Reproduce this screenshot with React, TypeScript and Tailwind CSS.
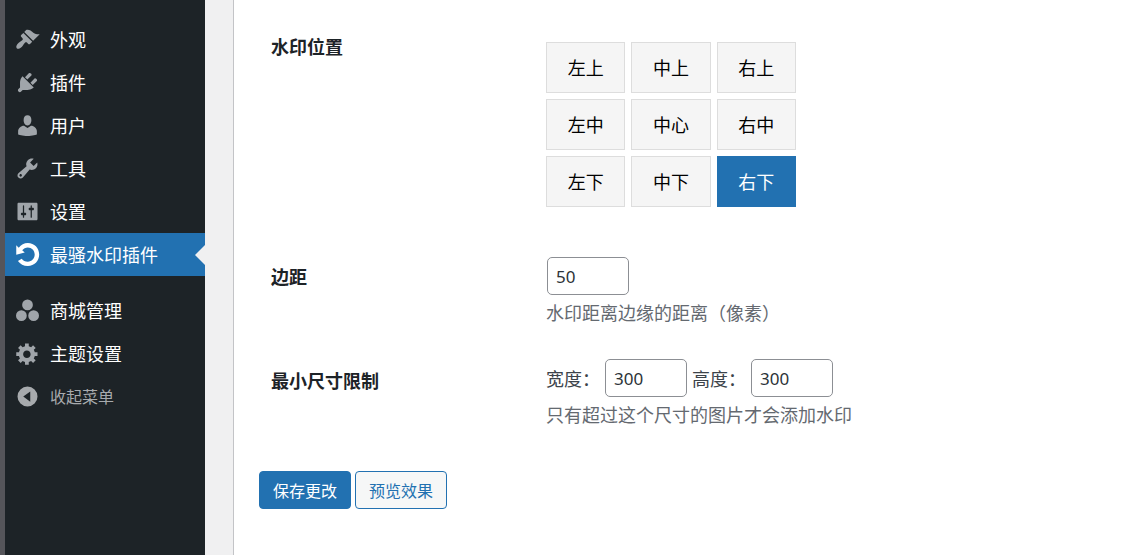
import { useState, type ReactNode } from "react";

const icons = {
  appearance:
    "M14.48 11.06L7.41 3.99l1.5-1.5c.5-.56 2.3-.47 3.51.32 1.21.8 1.43 1.28 2.91 2.1 1.18.64 2.45 1.26 4.45.85zm-.71.71L6.7 4.7 4.93 6.47c-.39.39-.39 1.02 0 1.41l1.06 1.06c.39.39.39 1.03 0 1.42-.6.6-1.43 1.11-2.21 1.69-.35.26-.7.53-1.01.84C1.43 14.23.4 16.08 1.4 17.07c.99 1 2.84-.03 4.18-1.36.31-.31.58-.66.85-1.02.57-.78 1.08-1.61 1.69-2.21.39-.39 1.02-.39 1.41 0l1.06 1.06c.39.39 1.02.39 1.41 0z",
  plugins:
    "M13.11 4.36L9.87 7.6 8 5.73l3.24-3.24c.35-.34 1.05-.2 1.56.32.52.51.66 1.21.31 1.55zm-8 1.77l.91-1.12 9.01 9.01-1.19.84c-.71.71-2.63 1.16-3.82 1.16H6.14L4.9 17.26c-.59.59-1.54.59-2.12 0-.59-.58-.59-1.53 0-2.12l1.24-1.24v-3.88c0-1.13.4-3.19 1.09-3.89zm7.26 3.97l3.24-3.24c.34-.35 1.04-.21 1.55.31.52.51.66 1.21.31 1.55l-3.24 3.25z",
  users:
    "M10 9.9c-2.2 0-3.1-2.3-3.1-4.3C6.9 3.4 8 1.8 10 1.8s3.1 1.6 3.1 3.8c0 2-.9 4.3-3.1 4.3zm0 2L12.8 10.2c2.5 0 4.7 2.1 4.7 4.3v2.6s-3.75 1.2-7.5 1.2-7.5-1.2-7.5-1.2v-2.6c0-2.2 2.2-4.3 4.7-4.3z",
  tools:
    "M16.68 9.77c-1.34 1.34-3.3 1.67-4.95.99l-5.41 6.52c-.99.99-2.59.99-3.58 0s-.99-2.59 0-3.57l6.52-5.42c-.68-1.65-.35-3.61.99-4.95 1.28-1.28 3.12-1.62 4.72-1.06l-2.89 2.89 2.82 2.82 2.86-2.87c.53 1.58.18 3.39-1.08 4.65zM3.81 16.21c.4.39 1.04.39 1.43 0 .4-.4.4-1.04 0-1.43-.39-.4-1.03-.4-1.43 0-.39.39-.39 1.03 0 1.43z",
  settings:
    "M18 16V4c0-.55-.45-1-1-1H3c-.55 0-1 .45-1 1v12c0 .55.45 1 1 1h14c.55 0 1-.45 1-1zM7.3 11h.7c.55 0 1 .45 1 1s-.45 1-1 1h-.7v1.5c0 .28-.22.5-.5.5s-.5-.22-.5-.5V13h-.6c-.55 0-1-.45-1-1s.45-1 1-1h.6V5.5c0-.28.22-.5.5-.5s.5.22.5.5V11zm5.2-2h-.6c-.55 0-1-.45-1-1s.45-1 1-1h.6V5.5c0-.28.22-.5.5-.5s.5.22.5.5V7h.7c.55 0 1 .45 1 1s-.45 1-1 1h-.7v5.5c0 .28-.22.5-.5.5s-.5-.22-.5-.5V9z",
  rotate:
    "M10.25 .8c5.2 0 9.1 4.1 9.1 9.2s-3.9 9.2-9.1 9.2c-3.3 0-6.2-1.6-7.9-4.1l3-1.8c1.1 1.4 2.8 2.4 4.9 2.4 3.1 0 5.5-2.5 5.5-5.7s-2.4-5.7-5.5-5.7c-1.8 0-3.4.9-4.5 2.3L7.8 8.4 1 10.2V2.6l2 2C4.8 2.2 7.3.8 10.25.8z",
  circles:
    "M10 1.2a4.3 4.3 0 1 1 0 8.6a4.3 4.3 0 1 1 0-8.6zM5.1 9.8a4.3 4.3 0 1 1 0 8.6a4.3 4.3 0 1 1 0-8.6zM14.9 9.8a4.3 4.3 0 1 1 0 8.6a4.3 4.3 0 1 1 0-8.6z",
  generic:
    "M18 12h-2.18c-.17.7-.44 1.35-.81 1.93l1.54 1.54-2.1 2.1-1.54-1.54c-.58.36-1.23.63-1.91.79V19H8v-2.18c-.68-.16-1.33-.43-1.91-.79l-1.54 1.54-2.12-2.12 1.54-1.54c-.36-.58-.63-1.23-.79-1.91H1V9.03h2.17c.16-.7.44-1.35.8-1.94L2.43 5.55l2.1-2.1 1.54 1.54c.58-.37 1.24-.64 1.93-.81V2h3v2.18c.68.16 1.33.43 1.91.79l1.54-1.54 2.12 2.12-1.54 1.54c.36.59.64 1.24.8 1.94H18V12zm-8.5 1.5c1.66 0 3-1.34 3-3s-1.34-3-3-3-3 1.34-3 3 1.34 3 3 3z",
  collapse:
    "M10 2a8 8 0 1 1 0 16a8 8 0 1 1 0-16zM12.2 5.9L6.6 10l5.6 4.1z",
};

type IconName = keyof typeof icons;

function Icon({ name }: { name: IconName }) {
  return (
    <svg viewBox="0 0 20 20" className="size-[25px] shrink-0" fill="currentColor" fillRule="evenodd" aria-hidden="true">
      <path d={icons[name]} />
    </svg>
  );
}

const mainMenu: { icon: IconName; label: string; active?: boolean }[] = [
  { icon: "appearance", label: "外观" },
  { icon: "plugins", label: "插件" },
  { icon: "users", label: "用户" },
  { icon: "tools", label: "工具" },
  { icon: "settings", label: "设置" },
  { icon: "rotate", label: "最骚水印插件", active: true },
];

const extraMenu: { icon: IconName; label: string }[] = [
  { icon: "circles", label: "商城管理" },
  { icon: "generic", label: "主题设置" },
];

function MenuItem({ icon, label, active }: { icon: IconName; label: string; active?: boolean }) {
  return (
    <li className={active ? "relative bg-[#2271b1]" : ""}>
      <a href="#" aria-current={active ? "page" : undefined} className="flex h-[43px] items-center gap-[10px] pl-[10px] text-white">
        <span className={active ? "text-white" : "text-[#a0a5aa]"}>
          <Icon name={icon} />
        </span>
        {label}
      </a>
      {active && (
        <span className="absolute top-1/2 right-0 -translate-y-1/2 border-y-10 border-r-10 border-y-transparent border-r-[#f0f0f1]" />
      )}
    </li>
  );
}

const positions = ["左上", "中上", "右上", "左中", "中心", "右中", "左下", "中下", "右下"];

function Row({ title, children }: { title: ReactNode; children: ReactNode }) {
  return (
    <div className="flex pl-3">
      <div className="w-[275px] shrink-0 font-bold text-[#1d2327]">{title}</div>
      <div className="min-w-0 flex-1">{children}</div>
    </div>
  );
}

const field =
  "mx-px h-[38px] w-[82px] rounded-[5px] border border-[#8c8f94] bg-white px-2 font-['Noto_Sans',sans-serif] text-[17px] text-[#2c3338]";

export default function App() {
  const [position, setPosition] = useState("右下");

  return (
    <div className="flex min-h-screen bg-[#f0f0f1] font-['Noto_Sans_CJK_SC',sans-serif] text-[18px] leading-[25px] text-[#3c434a]">
      <div className="w-[5px] shrink-0 bg-[#55555a]" />
      <nav className="w-[200px] shrink-0 bg-[#1d2327] pt-[18px]">
        <ul>
          {mainMenu.map((m) => (
            <MenuItem key={m.label} {...m} />
          ))}
        </ul>
        <ul className="mt-[13px]">
          {extraMenu.map((m) => (
            <MenuItem key={m.label} {...m} />
          ))}
        </ul>
        <button type="button" className="flex h-[43px] w-full items-center gap-[10px] pl-[10px] text-[16px] text-[#a7aaad]">
          <Icon name="collapse" />
          收起菜单
        </button>
      </nav>

      <main className="ml-7 min-w-0 flex-1 border-l border-[#c3c4c7] bg-white px-[25px] pt-[34px] pb-10">
        <form onSubmit={(e) => e.preventDefault()}>
          <Row title={<h2>水印位置</h2>}>
            <div className="mt-2 grid w-[250px] grid-cols-3 gap-[6px]">
              {positions.map((p) => (
                <button
                  key={p}
                  type="button"
                  aria-pressed={p === position}
                  onClick={() => setPosition(p)}
                  className={
                    p === position
                      ? "border border-[#2271b1] bg-[#2271b1] py-3 text-white"
                      : "border border-[#dddddd] bg-[#f5f5f5] py-3 text-black"
                  }
                >
                  {p}
                </button>
              ))}
            </div>
          </Row>

          <div className="mt-[50px]">
            <Row title={<label htmlFor="margin" className="block pt-[7px]">边距</label>}>
              <input id="margin" type="text" inputMode="numeric" defaultValue="50" className={field} />
              <p className="mt-[5px] text-[#646970]">水印距离边缘的距离（像素）</p>
            </Row>
          </div>

          <div className="mt-[34px]">
            <Row title={<h2 className="pt-[9px]">最小尺寸限制</h2>}>
              <div className="flex items-center gap-1">
                <label htmlFor="min-width">宽度：</label>
                <input id="min-width" type="text" inputMode="numeric" defaultValue="300" className={field} />
                <label htmlFor="min-height">高度：</label>
                <input id="min-height" type="text" inputMode="numeric" defaultValue="300" className={field} />
              </div>
              <p className="mt-[5px] text-[#646970]">只有超过这个尺寸的图片才会添加水印</p>
            </Row>
          </div>

          <div className="mt-11 flex gap-1 text-[16px]">
            <button type="submit" className="h-[38px] rounded-[4px] border border-[#2271b1] bg-[#2271b1] px-[13px] text-white">
              保存更改
            </button>
            <button type="button" className="h-[38px] rounded-[4px] border border-[#2271b1] bg-[#f6f7f7] px-[13px] text-[#2271b1]">
              预览效果
            </button>
          </div>
        </form>
      </main>
    </div>
  );
}
